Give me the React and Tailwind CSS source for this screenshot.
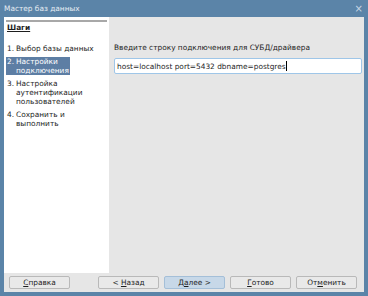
import React from 'react'

const steps = [
    { n: '1.', lines: ['Выбор базы данных'] },
    { n: '2.', lines: ['Настройки', 'подключения'], active: true },
    { n: '3.', lines: ['Настройка', 'аутентификации', 'пользователей'] },
    { n: '4.', lines: ['Сохранить и', 'выполнить'] },
]

const buttons = [
    { pre: '', key: 'С', post: 'правка' },
    { pre: '< ', key: 'Н', post: 'азад', gap: true },
    { pre: 'Д', key: 'а', post: 'лее >', primary: true },
    { pre: '', key: 'Г', post: 'отово' },
    { pre: 'От', key: 'м', post: 'енить' },
]

export default function App() {
    return (
        <div className="w-[368px] h-[296px] bg-[#5b84a8] flex flex-col text-[7.4px] leading-[9px] text-[#1e1e1e]" style={{ fontFamily: '"DejaVu Sans", sans-serif' }}>
            {/* Title bar */}
            <div className="h-[17px] flex items-center justify-between pl-[4px] pr-[5px] text-[#e6edf3]">
                <span>Мастер баз данных</span>
                <span className="text-[10px] text-[#c7d6e4]">×</span>
            </div>

            {/* Body */}
            <div className="flex-1 mx-[4px] mb-[4px] bg-[#e6e6e6] flex flex-col">
                <div className="flex flex-1">
                    {/* Steps panel */}
                    <div className="w-[105px] bg-white pl-[2px] pr-[2px] pt-[3px]">
                        <div className="h-[2px] bg-[#a8a8a8]" />
                        <div className="font-bold underline mt-[1px] ml-[1px]">Шаги</div>
                        <div className="mt-[12px] flex flex-col gap-[4px]">
                            {steps.map((s) => (
                                <div key={s.n} className="flex">
                                    <div className={`flex px-[1px] ${s.active ? 'bg-[#5d7ea4] text-white' : ''}`}>
                                        <span className="w-[8px]">{s.n}</span>
                                        <div className="flex flex-col ml-[1px]">
                                            {s.lines.map((l) => (
                                                <span key={l}>{l}</span>
                                            ))}
                                        </div>
                                    </div>
                                </div>
                            ))}
                        </div>
                    </div>

                    {/* Content */}
                    <div className="flex-1 pl-[5px] pr-[2px] pt-[26px]">
                        <div>Введите строку подключения для СУБД/драйвера</div>
                        <div className="mt-[6px] h-[16px] bg-white border border-[#9fc6e8] rounded-[2px] flex items-center px-[2px]">
                            <span>host=localhost port=5432 dbname=postgres</span>
                            <span className="w-[1px] h-[10px] bg-black" />
                        </div>
                    </div>
                </div>

                {/* Buttons */}
                <div className="h-[19px] flex items-start pt-[3px] px-[5px]">
                    {buttons.map((b) => (
                        <div
                            key={b.post}
                            className={`w-[61px] h-[13px] flex items-center justify-center rounded-[2px] border ${b.gap ? 'ml-[28px]' : 'ml-[5px] first:ml-0'} ${b.primary ? 'bg-[#c7d8e8] border-[#a4bfd8]' : 'bg-[#e9e9e9] border-[#b9b9b9]'}`}
                        >
                            <span className="whitespace-pre">{b.pre}</span>
                            <span className="underline">{b.key}</span>
                            <span>{b.post}</span>
                        </div>
                    ))}
                </div>
            </div>
        </div>
    )
}
